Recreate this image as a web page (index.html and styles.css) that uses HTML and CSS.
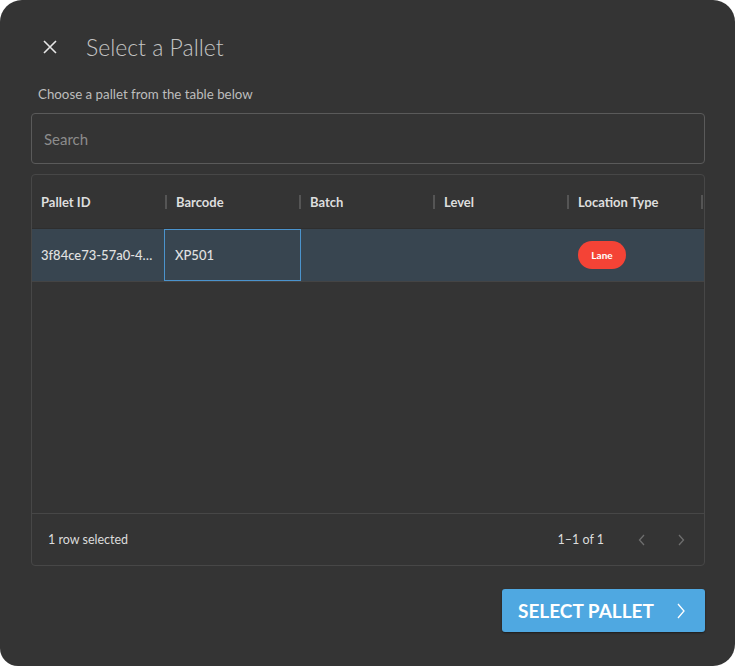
FILE: index.html
```html
<!DOCTYPE html>
<html>
<head>
<meta charset="utf-8">
<link rel="stylesheet" href="styles.css">
</head>
<body>
<div class="dialog">
  <div class="header">
    <svg class="close" width="14" height="14" viewBox="0 0 14 14"><path d="M1 1L13 13M13 1L1 13" stroke="#e6e6e6" stroke-width="1.6" fill="none"/></svg>
    <h1 class="title">Select a Pallet</h1>
  </div>
  <p class="subtitle">Choose a pallet from the table below</p>
  <div class="search"><span class="placeholder">Search</span></div>
  <div class="grid">
    <div class="grid-head">
      <div class="hcell">Pallet ID<span class="sep"></span></div>
      <div class="hcell">Barcode<span class="sep"></span></div>
      <div class="hcell">Batch<span class="sep"></span></div>
      <div class="hcell">Level<span class="sep"></span></div>
      <div class="hcell">Location Type<span class="sep"></span></div>
    </div>
    <div class="grid-row">
      <div class="cell">3f84ce73-57a0-4…</div>
      <div class="cell focus">XP501</div>
      <div class="cell"></div>
      <div class="cell"></div>
      <div class="cell"><span class="chip">Lane</span></div>
    </div>
    <div class="grid-body"></div>
    <div class="grid-foot">
      <span class="selected">1 row selected</span>
      <span class="range">1–1 of 1</span>
      <svg class="arrow" width="10" height="12" viewBox="0 0 10 12"><path d="M7 1L2.5 6L7 11" stroke="#6e6e6e" stroke-width="1.3" fill="none"/></svg>
      <svg class="arrow" width="10" height="12" viewBox="0 0 10 12"><path d="M3 1L7.5 6L3 11" stroke="#6e6e6e" stroke-width="1.3" fill="none"/></svg>
    </div>
  </div>
  <div class="actions">
    <button class="btn">SELECT PALLET
      <svg class="btn-chev" width="10" height="18" viewBox="0 0 10 18"><path d="M2 2L8 9L2 16" stroke="#ffffff" stroke-width="1.3" fill="none"/></svg>
    </button>
  </div>
</div>
</body>
</html>
```
FILE: styles.css
```css
* { box-sizing: border-box; }
html, body { margin: 0; padding: 0; background: #ffffff; }
body { font-family: "Lato", "Noto Sans", sans-serif; }

.dialog {
  width: 735px;
  height: 666px;
  background: #343434;
  border-radius: 22px 22px 22px 18px;
  padding: 27px 30px 0 31px;
  display: flex;
  flex-direction: column;
}

.header {
  height: 40px;
  display: flex;
  align-items: center;
}
.close { margin-left: 12px; }
.title {
  margin: 0 0 0 29px;
  font-size: 23px;
  font-weight: 300;
  color: #c4c4c4;
}

.subtitle {
  margin: 19px 0 0 7px;
  font-size: 13.3px;
  line-height: 16px;
  color: #bdbdbd;
}

.search {
  margin-top: 11px;
  height: 51px;
  border: 1px solid #5a5a5a;
  border-radius: 4px;
  display: flex;
  align-items: center;
  padding-left: 12px;
}
.placeholder { font-size: 15px; color: #8c8c8c; }

.grid {
  margin-top: 10px;
  height: 392px;
  border: 1px solid #474747;
  border-radius: 4px;
  display: flex;
  flex-direction: column;
}
.grid-head {
  height: 54px;
  display: grid;
  grid-template-columns: 135px repeat(4, 134px);
  border-bottom: 1px solid #2e2e2e;
}
.hcell {
  position: relative;
  display: flex;
  align-items: center;
  padding-left: 9px;
  font-size: 13px;
  font-weight: 700;
  color: #dedede;
}
.sep {
  position: absolute;
  right: 0;
  top: 20px;
  width: 2px;
  height: 14px;
  background: #555555;
}

.grid-row {
  height: 53px;
  display: grid;
  grid-template-columns: 132px 137px 134px 134px 134px 1fr;
  background: #384550;
  border-bottom: 1px solid #444;
}
.cell {
  display: flex;
  align-items: center;
  padding-left: 9px;
  font-size: 13px;
  font-weight: 500;
  color: #e2e2e2;
  white-space: nowrap;
  overflow: hidden;
}
.cell.focus {
  border: 1px solid #4b93cc;
  padding-left: 10px;
}
.chip {
  display: inline-flex;
  align-items: center;
  justify-content: center;
  width: 48px;
  height: 28px;
  border-radius: 14px;
  background: #f44336;
  color: #ffffff;
  font-size: 10px;
  font-weight: 700;
}

.grid-body { flex: 1; }

.grid-foot {
  height: 52px;
  border-top: 1px solid #474747;
  display: flex;
  align-items: center;
  padding-left: 16px;
  padding-right: 18px;
  font-size: 12.5px;
  color: #dcdcdc;
}
.selected { flex: 1; }
.range { margin-right: 33px; }
.arrow + .arrow { margin-left: 29px; }

.actions {
  margin-top: 23px;
  display: flex;
  justify-content: flex-end;
}
.btn {
  width: 203px;
  height: 43px;
  border: none;
  border-radius: 3px;
  background: #4fa8e1;
  box-shadow: 0 1px 2px rgba(0,0,0,0.45);
  color: #ffffff;
  font-family: "Lato", "Noto Sans", sans-serif;
  font-size: 19px;
  font-weight: 700;
  display: flex;
  align-items: center;
  padding: 0 0 0 16px;
}
.btn-chev { margin-left: 22px; }
```
